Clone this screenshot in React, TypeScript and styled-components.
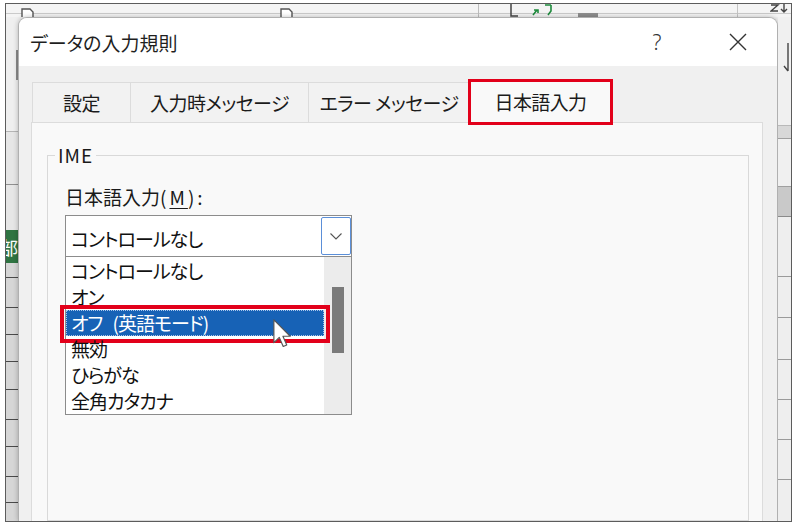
import React from "react";
import styled, { createGlobalStyle } from "styled-components";

const GlobalStyle = createGlobalStyle`
  html, body { margin: 0; padding: 0; background: #ffffff; }
  body {
    width: 800px;
    height: 527px;
    overflow: hidden;
    font-family: "Noto Sans CJK JP", "Noto Sans", sans-serif;
  }
  * { box-sizing: border-box; }
`;

const Frame = styled.div`
  margin: 3px 0 0 5px;
  width: 787px;
  height: 519px;
  border: 1px solid #5c5c5c;
  background: #eeeeee;
  display: flex;
  flex-direction: column;
  overflow: hidden;
`;

const TopStrip = styled.div`
  height: 13px;
  flex: none;
  display: flex;
  align-items: flex-end;
  background: linear-gradient(#f4f4f4 0 9px, #cacaca 9px 10px, #f4f4f4 10px);
`;

const Deco = styled.div<{ $ml: number; $w: number; $h: number }>`
  flex: none;
  margin-left: ${(p) => p.$ml}px;
  width: ${(p) => p.$w}px;
  height: ${(p) => p.$h}px;
  display: flex;
  align-items: flex-end;
`;

const VLine = styled.div<{ $ml: number; $c: string }>`
  flex: none;
  margin-left: ${(p) => p.$ml}px;
  width: 1px;
  height: 13px;
  background: ${(p) => p.$c};
`;

const GrayChip = styled.div<{ $ml: number }>`
  flex: none;
  margin-left: ${(p) => p.$ml}px;
  width: 20px;
  height: 4px;
  background: #8e8e8e;
`;

const Middle = styled.div`
  flex: 1;
  min-height: 0;
  display: flex;
`;

const Strip = styled.div<{ $w?: number }>`
  ${(p) => (p.$w ? `width: ${p.$w}px; flex: none;` : "flex: 1;")}
  display: flex;
  flex-direction: column;
  overflow: hidden;
`;

const Cell = styled.div<{ $h?: number; $bg: string; $line?: string; $edge?: boolean }>`
  ${(p) => (p.$h ? `height: ${p.$h}px; flex: none;` : "flex: 1;")}
  background: ${(p) => p.$bg};
  border-bottom: ${(p) => (p.$line ? `1px solid ${p.$line}` : "none")};
  border-right: ${(p) => (p.$edge ? "2px solid #8a8a8a" : "none")};
  display: flex;
  align-items: center;
  overflow: hidden;
`;

const GreenText = styled.span`
  margin-left: -6px;
  color: #ffffff;
  font-size: 18px;
  line-height: 1;
`;

const Dialog = styled.div`
  width: 760px;
  flex: none;
  display: flex;
  flex-direction: column;
  background: #f0f0f0;
  border: 1px solid #b0b0b0;
  border-bottom: none;
  border-radius: 9px 9px 0 0;
  overflow: hidden;
  box-shadow: 0 0 5px rgba(0, 0, 0, 0.25);
`;

const TitleBar = styled.div`
  height: 48px;
  flex: none;
  display: flex;
  align-items: center;
  background: #ffffff;
  padding: 0 16px 0 11px;
`;

const Title = styled.div`
  font-size: 19px;
  color: #1f1f1f;
  font-feature-settings: "palt";
  padding-top: 1px;
`;

const TitleButtons = styled.div`
  margin-left: auto;
  display: flex;
  gap: 35px;
`;

const TitleButton = styled.div`
  width: 46px;
  height: 48px;
  display: flex;
  align-items: center;
  justify-content: center;
  color: #333333;
  font-family: "Noto Sans", sans-serif;
  font-size: 21px;
  font-weight: 300;
`;

const Body = styled.div`
  flex: 1;
  min-height: 0;
  display: flex;
  flex-direction: column;
  padding: 14px 14px 0 12px;
`;

const TabRow = styled.div`
  height: 42px;
  flex: none;
  display: flex;
  align-items: flex-end;
  padding-left: 1px;
`;

const Tab = styled.div<{ $w: number; $active?: boolean }>`
  position: relative;
  width: ${(p) => p.$w}px;
  height: ${(p) => (p.$active ? 43 : 40)}px;
  margin-left: -1px;
  margin-bottom: ${(p) => (p.$active ? -1 : 0)}px;
  z-index: ${(p) => (p.$active ? 1 : 0)};
  display: flex;
  align-items: center;
  justify-content: center;
  padding-bottom: ${(p) => (p.$active ? 1 : 0)}px;
  background: ${(p) => (p.$active ? "#f9f9f9" : "#f2f2f2")};
  border: 1px solid #dcdcdc;
  border-bottom: none;
  font-size: 19px;
  letter-spacing: -0.6px;
  color: #1b1b1b;
  font-feature-settings: "palt";
  white-space: nowrap;
  &:first-child { margin-left: 0; }
  ${(p) =>
    p.$active
      ? `&::after {
          content: "";
          position: absolute;
          top: -2px;
          bottom: -2px;
          left: -2px;
          right: -2px;
          border: 3px solid #e2001a;
        }`
      : ""}
`;

const Panel = styled.div`
  flex: 1;
  min-height: 0;
  display: flex;
  flex-direction: column;
  background: #f9f9f9;
  border: 1px solid #dcdcdc;
  border-bottom: none;
  padding: 21px 13px 0 15px;
`;

const GroupBox = styled.fieldset`
  flex: 1;
  margin: 0;
  padding: 0 0 0 17px;
  min-width: 0;
  border: 1px solid #d9d9d9;
`;

const Legend = styled.legend`
  margin-left: -10px;
  padding: 0 3px;
  font-size: 19px;
  line-height: 22px;
  letter-spacing: 1px;
  color: #1a1a1a;
`;

const FieldLabel = styled.div`
  margin-top: 18px;
  height: 26px;
  line-height: 26px;
  font-size: 19px;
  color: #1a1a1a;
  font-feature-settings: "palt";
`;

const Accel = styled.span`
  letter-spacing: 3px;
`;

const U = styled.span`
  text-decoration: underline;
  text-underline-offset: 3px;
`;

const Combo = styled.div`
  margin-top: 5px;
  width: 287px;
  height: 42px;
  display: flex;
  align-items: center;
  background: #ffffff;
  border: 1px solid #8c8c8c;
  padding-left: 5px;
`;

const ComboText = styled.span`
  font-size: 19px;
  line-height: 1;
  padding-top: 4px;
  letter-spacing: -1px;
  color: #111111;
  font-feature-settings: "palt";
`;

const DropButton = styled.div`
  margin-left: auto;
  width: 30px;
  height: 38px;
  display: flex;
  align-items: center;
  justify-content: center;
  background: #ffffff;
  border: 1px solid #5b8fd8;
  border-radius: 2px;
`;

const List = styled.div`
  width: 287px;
  height: 158px;
  display: grid;
  grid-template-columns: 1fr 27px;
  background: #ffffff;
  border: 1px solid #8c8c8c;
  border-top: none;
`;

const Items = styled.div`
  padding-top: 1px;
  display: flex;
  flex-direction: column;
`;

const Item = styled.div<{ $selected?: boolean }>`
  position: relative;
  height: 26px;
  line-height: 26px;
  padding-left: 5px;
  font-size: 19px;
  letter-spacing: -1px;
  word-spacing: 7px;
  white-space: nowrap;
  font-feature-settings: "palt";
  color: ${(p) => (p.$selected ? "#ffffff" : "#111111")};
  background: ${(p) => (p.$selected ? "#1762b6" : "transparent")};
  ${(p) =>
    p.$selected
      ? `outline: 1px dotted #a9c6ec;
         outline-offset: -1px;
         &::after {
           content: "";
           position: absolute;
           top: -5px;
           bottom: -7px;
           left: -6px;
           right: -6px;
           border: 4px solid #e2001a;
         }`
      : ""}
`;

const Cursor = styled.svg`
  position: absolute;
  left: 207px;
  top: 9px;
  z-index: 2;
`;

const Track = styled.div`
  background: #ececec;
  padding: 30px 0 0 8px;
`;

const Thumb = styled.div`
  width: 12px;
  height: 66px;
  background: #7a7a7a;
`;

const RightArrow = styled.svg`
  margin-left: 3px;
  align-self: flex-start;
  margin-top: 10px;
  flex: none;
`;

type CellSpec = { h?: number; bg: string; line?: string; green?: boolean; arrow?: boolean; edge?: boolean };

const leftCells: CellSpec[] = [
  { h: 33, bg: "#efefef" },
  { h: 30, bg: "#efefef", edge: true },
  { h: 52, bg: "#efefef", line: "#b5b5b5" },
  { h: 53, bg: "#e6e6e6", line: "#8f8f8f" },
  { h: 45, bg: "#e6e6e6" },
  { h: 33, bg: "#2f7442", green: true },
  { h: 15, bg: "#d6d6d6", line: "#4a4a4a" },
  { h: 30, bg: "#d6d6d6", line: "#4a4a4a" },
  { h: 27, bg: "#d6d6d6", line: "#4a4a4a" },
  { h: 27, bg: "#d6d6d6", line: "#4a4a4a" },
  { h: 28, bg: "#d6d6d6", line: "#4a4a4a" },
  { h: 30, bg: "#d6d6d6", line: "#4a4a4a" },
  { h: 27, bg: "#d6d6d6", line: "#4a4a4a" },
  { h: 30, bg: "#d6d6d6", line: "#4a4a4a" },
  { h: 26, bg: "#d6d6d6", line: "#4a4a4a" },
  { bg: "#d6d6d6" },
];

const rightCells: CellSpec[] = [
  { h: 109, bg: "#f0f0f0", line: "#b9b9b9", arrow: true },
  { h: 13, bg: "#d8d8d8", line: "#a0a0a0" },
  { h: 48, bg: "#f0f0f0", line: "#a0a0a0" },
  { h: 30, bg: "#c9c9c9", line: "#8a8a8a" },
  { h: 60, bg: "#eeeeee", line: "#9a9a9a" },
  { h: 41, bg: "#eeeeee", line: "#9a9a9a" },
  { h: 42, bg: "#eeeeee", line: "#9a9a9a" },
  { h: 40, bg: "#eeeeee", line: "#9a9a9a" },
  { h: 40, bg: "#eeeeee", line: "#9a9a9a" },
  { h: 40, bg: "#eeeeee", line: "#9a9a9a" },
  { bg: "#eeeeee" },
];

const tabs = [
  { label: "設定", w: 99 },
  { label: "入力時メッセージ", w: 179 },
  { label: "エラー メッセージ", w: 162 },
  { label: "日本語入力", w: 143, active: true },
];

const options = ["コントロールなし", "オン", "オフ (英語モード)", "無効", "ひらがな", "全角カタカナ"];

const DocIcon = () => (
  <svg width="13" height="9" viewBox="0 0 13 9">
    <path d="M1 9 V1 H9 L12 4 V9" fill="#ffffff" stroke="#555" strokeWidth="1.4" />
  </svg>
);

export default function App() {
  return (
    <>
      <GlobalStyle />
      <Frame>
        <TopStrip>
          <Deco $ml={15} $w={13} $h={9}>
            <DocIcon />
          </Deco>
          <Deco $ml={246} $w={13} $h={9}>
            <DocIcon />
          </Deco>
          <VLine $ml={185} $c="#bdbdbd" />
          <Deco $ml={31} $w={8} $h={13}>
            <svg width="8" height="13" viewBox="0 0 8 13">
              <path d="M1 0 V12 H8" fill="none" stroke="#444" strokeWidth="1.5" />
            </svg>
          </Deco>
          <Deco $ml={12} $w={25} $h={13}>
            <svg width="25" height="13" viewBox="0 0 25 13">
              <path d="M3 11 L7 6 M4 6 H8 V9" fill="none" stroke="#1e8a3c" strokeWidth="1.6" />
              <path d="M15 1 H21 M21 1 V7 L18 11" fill="none" stroke="#1e8a3c" strokeWidth="1.6" />
            </svg>
          </Deco>
          <GrayChip $ml={23} />
          <VLine $ml={139} $c="#c4c4c4" />
          <Deco $ml={32} $w={20} $h={13}>
            <svg width="20" height="13" viewBox="0 0 20 13">
              <path d="M1 1 H8 L1 7 H8" fill="none" stroke="#444" strokeWidth="1.4" />
              <path d="M14 0 V8 M11 5 L14 8 L17 5" fill="none" stroke="#444" strokeWidth="1.4" />
            </svg>
          </Deco>
        </TopStrip>
        <Middle>
          <Strip $w={12}>
            {leftCells.map((c, i) => (
              <Cell key={i} $h={c.h} $bg={c.bg} $line={c.line} $edge={c.edge}>
                {c.green ? <GreenText>部</GreenText> : null}
              </Cell>
            ))}
          </Strip>
          <Dialog>
            <TitleBar>
              <Title>データの入力規則</Title>
              <TitleButtons>
                <TitleButton>?</TitleButton>
                <TitleButton>
                  <svg width="18" height="18" viewBox="0 0 18 18">
                    <path d="M1 1 L17 17 M17 1 L1 17" stroke="#333" strokeWidth="1.4" />
                  </svg>
                </TitleButton>
              </TitleButtons>
            </TitleBar>
            <Body>
              <TabRow>
                {tabs.map((t) => (
                  <Tab key={t.label} $w={t.w} $active={t.active}>
                    {t.label}
                  </Tab>
                ))}
              </TabRow>
              <Panel>
                <GroupBox>
                  <Legend>IME</Legend>
                  <FieldLabel>
                    日本語入力
                    <Accel>
                      (<U>M</U>):
                    </Accel>
                  </FieldLabel>
                  <Combo>
                    <ComboText>コントロールなし</ComboText>
                    <DropButton>
                      <svg width="12" height="7" viewBox="0 0 12 7">
                        <path d="M0.5 0.5 L6 6 L11.5 0.5" fill="none" stroke="#555" strokeWidth="1.1" />
                      </svg>
                    </DropButton>
                  </Combo>
                  <List>
                    <Items>
                      {options.map((o, i) => (
                        <Item key={o} $selected={i === 2}>
                          {o}
                          {i === 2 ? (
                            <Cursor width="19" height="30" viewBox="0 0 13 20.5">
                              <path
                                d="M0.6 0.6 V16.2 L4.3 12.6 L7 18.8 L9.4 17.8 L6.8 11.8 H11.8 Z"
                                fill="#ffffff"
                                stroke="#555555"
                                strokeWidth="0.8"
                                strokeLinejoin="round"
                              />
                            </Cursor>
                          ) : null}
                        </Item>
                      ))}
                    </Items>
                    <Track>
                      <Thumb />
                    </Track>
                  </List>
                </GroupBox>
              </Panel>
            </Body>
          </Dialog>
          <Strip>
            {rightCells.map((c, i) => (
              <Cell key={i} $h={c.h} $bg={c.bg} $line={c.line}>
                {c.arrow ? (
                  <RightArrow width="12" height="60" viewBox="0 0 12 60">
                    <path d="M7 16 V44 M3 39 L7 44" fill="none" stroke="#444" strokeWidth="1.4" />
                  </RightArrow>
                ) : null}
              </Cell>
            ))}
          </Strip>
        </Middle>
      </Frame>
    </>
  );
}
